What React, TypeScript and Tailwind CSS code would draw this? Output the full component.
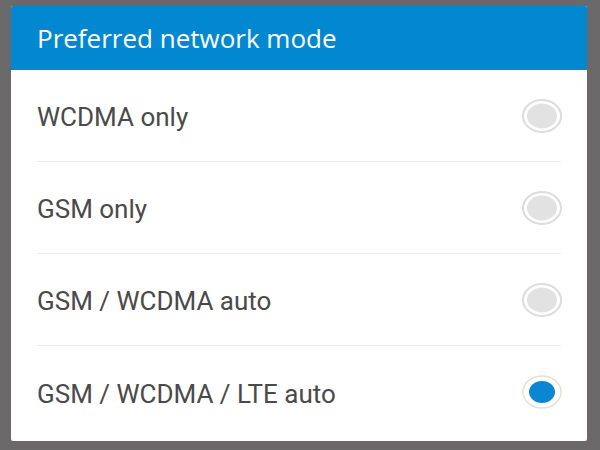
import React from "react";

const options = [
  { label: "WCDMA only", selected: false },
  { label: "GSM only", selected: false },
  { label: "GSM / WCDMA auto", selected: false },
  { label: "GSM / WCDMA / LTE auto", selected: true },
];

function Radio({ selected }: { selected: boolean }) {
  return (
    <svg width="42" height="36" viewBox="0 0 42 36">
      {selected ? (
        <>
          <ellipse cx="21" cy="18" rx="19" ry="16" fill="#ffffff" stroke="#e6e0d8" strokeWidth="1.5" />
          <ellipse cx="21" cy="18" rx="13" ry="11" fill="#0a86d2" />
        </>
      ) : (
        <>
          <ellipse cx="21" cy="18" rx="19" ry="16" fill="#ffffff" stroke="#dcdcdc" strokeWidth="2" />
          <ellipse cx="21" cy="18" rx="15" ry="12.5" fill="#e2e2e2" />
        </>
      )}
    </svg>
  );
}

export default function App() {
  return (
    <div
      className="w-[600px] h-[450px] bg-[#6a6868] pl-[11px] pr-[13px] pt-[6px] pb-[9px]"
      style={{ fontFamily: "Roboto, 'Liberation Sans', sans-serif" }}
    >
      <div className="w-full h-full bg-white flex flex-col rounded-[2px] overflow-hidden">
        <div className="h-[64px] bg-[#0288d1] flex items-center pl-[26px] pb-[1px]">
          <span
            className="text-white text-[26px] leading-none"
            style={{ fontFamily: "'Open Sans', 'Noto Sans', sans-serif" }}
          >
            Preferred network mode
          </span>
        </div>
        <div className="flex flex-col px-[26px]">
          {options.map((o, i) => (
            <div
              key={o.label}
              className={`h-[92px] flex items-center justify-between ${
                i < options.length - 1 ? "border-b border-[#ececec]" : ""
              }`}
            >
              <span className="text-[26px] text-[#4a4a4a] pt-[4px]">{o.label}</span>
              <div className="mr-[-2px]">
                <Radio selected={o.selected} />
              </div>
            </div>
          ))}
        </div>
      </div>
    </div>
  );
}
